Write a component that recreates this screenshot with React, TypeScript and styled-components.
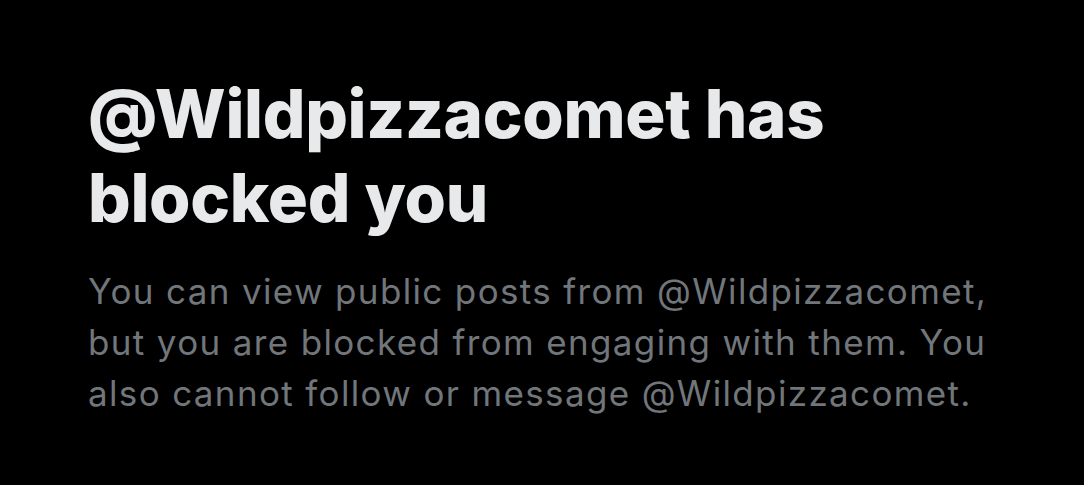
import styled, { createGlobalStyle } from "styled-components";

const GlobalStyle = createGlobalStyle`
  html, body {
    margin: 0;
    padding: 0;
    background: #000000;
  }
  body {
    font-family: Inter, "Noto Sans", sans-serif;
  }
`;

const HANDLE = "@Wildpizzacomet";

const App: React.FC = () => {
  return (
    <>
      <GlobalStyle />
      <Page>
        <Notice>
          <Title>{`${HANDLE} has blocked you`}</Title>
          <Body>
            You can view public posts from {HANDLE}, but you are blocked from
            engaging with them. You also cannot follow or message {HANDLE}.
          </Body>
        </Notice>
      </Page>
    </>
  );
};

export default App;

const Page = styled.main`
  width: 1084px;
  height: 485px;
  background: #000000;
  box-sizing: border-box;
  padding: 72px 0 0 88px;
`;

const Notice = styled.section`
  display: flex;
  flex-direction: column;
  gap: 26px;
  width: 915px;
`;

const Title = styled.h1`
  margin: 0;
  color: #e7e9ea;
  font-family: Inter, "Noto Sans", sans-serif;
  font-weight: 800;
  font-size: 67px;
  line-height: 84px;
  letter-spacing: -0.3px;
  max-width: 760px;
`;

const Body = styled.p`
  margin: 0;
  color: #71767b;
  font-family: Inter, "Noto Sans", sans-serif;
  font-weight: 400;
  font-size: 35px;
  line-height: 51px;
  letter-spacing: 1.35px;
`;
